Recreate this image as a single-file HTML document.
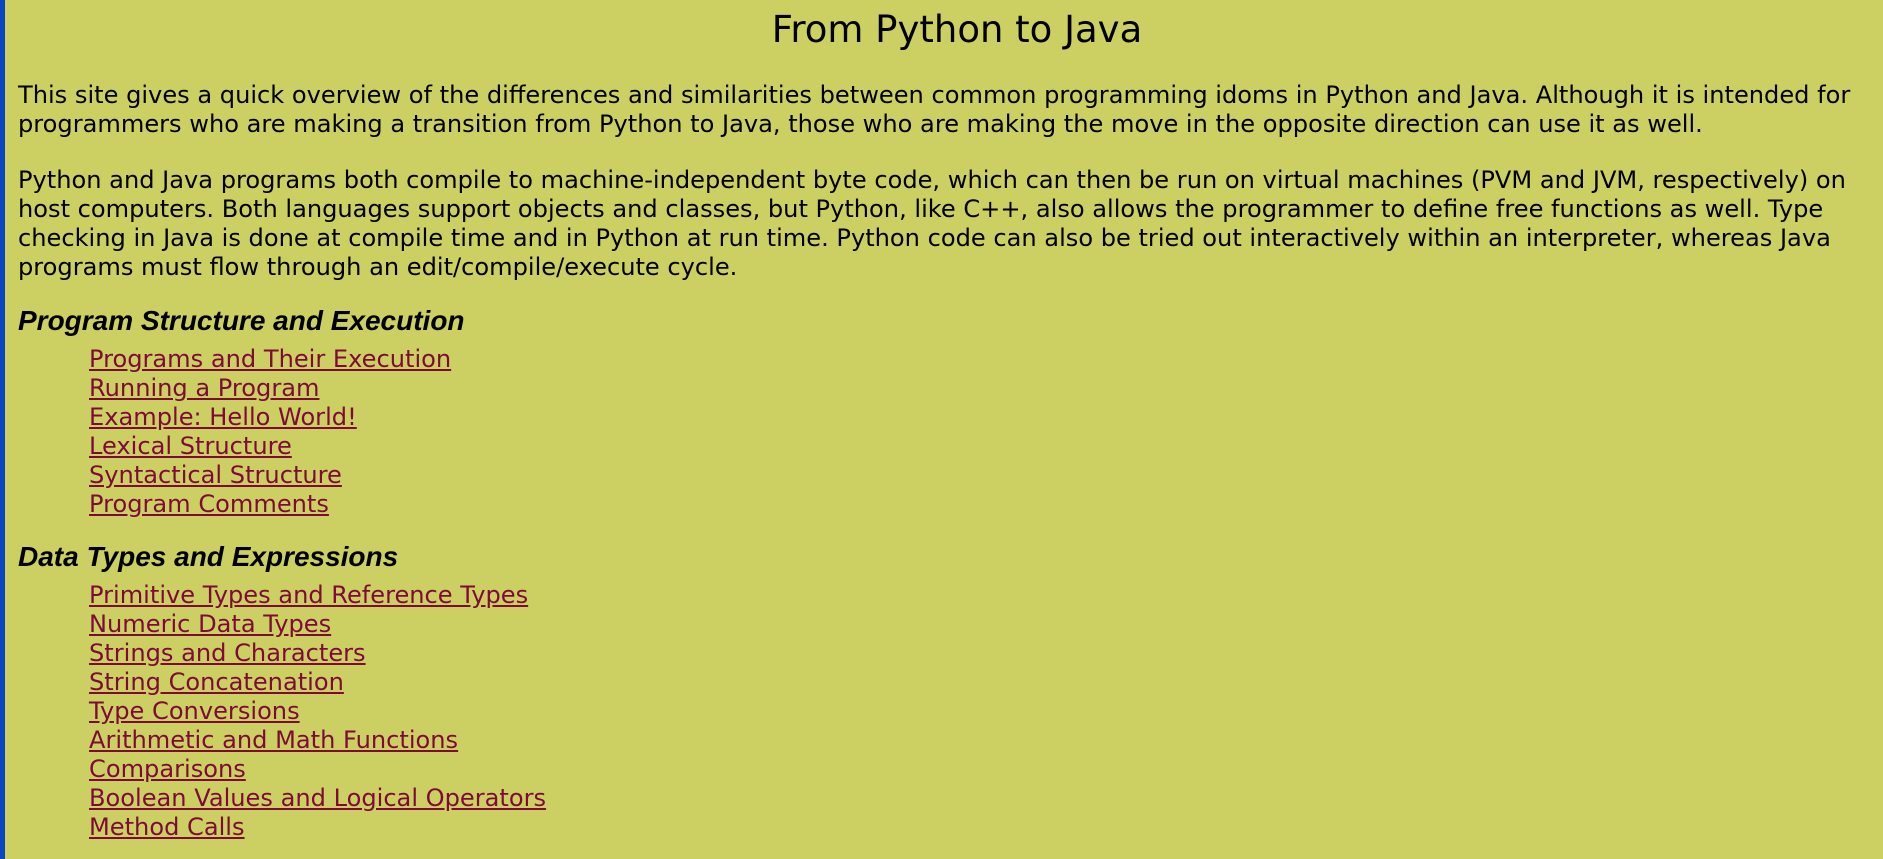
<!DOCTYPE html>
<html><head><meta charset="utf-8"><style>
html,body{margin:0;padding:0;}
body{width:1883px;height:859px;overflow:hidden;background:#cccf61;border-left:5px solid #0b45c2;box-sizing:border-box;font-family:"DejaVu Sans",sans-serif;font-size:24.1px;color:#000;position:relative;}
h1{position:absolute;margin:0;top:8px;left:13px;width:1878px;text-align:center;font-weight:normal;font-size:37px;line-height:44px;}
.p{position:absolute;left:13px;line-height:29px;white-space:nowrap;}
h2{position:absolute;margin:0;left:13px;font-family:"Liberation Sans",sans-serif;font-weight:bold;font-style:italic;font-size:28px;}
ul{position:absolute;left:84px;margin:0;padding:0;list-style:none;line-height:29px;}
a{color:#7f0a3a;text-decoration:underline;}
</style></head><body>
<h1>From Python to Java</h1>
<div class="p" style="top:81px">This site gives a quick overview of the differences and similarities between common programming idoms in Python and Java. Although it is intended for<br>programmers who are making a transition from Python to Java, those who are making the move in the opposite direction can use it as well.</div>
<div class="p" style="top:166px">Python and Java programs both compile to machine-independent byte code, which can then be run on virtual machines (PVM and JVM, respectively) on<br>host computers. Both languages support objects and classes, but Python, like C++, also allows the programmer to define free functions as well. Type<br>checking in Java is done at compile time and in Python at run time. Python code can also be tried out interactively within an interpreter, whereas Java<br>programs must flow through an edit/compile/execute cycle.</div>
<h2 style="top:305px">Program Structure and Execution</h2>
<ul style="top:345px">
<li><a>Programs and Their Execution</a></li>
<li><a>Running a Program</a></li>
<li><a>Example: Hello World!</a></li>
<li><a>Lexical Structure</a></li>
<li><a>Syntactical Structure</a></li>
<li><a>Program Comments</a></li>
</ul>
<h2 style="top:541px">Data Types and Expressions</h2>
<ul style="top:581px">
<li><a>Primitive Types and Reference Types</a></li>
<li><a>Numeric Data Types</a></li>
<li><a>Strings and Characters</a></li>
<li><a>String Concatenation</a></li>
<li><a>Type Conversions</a></li>
<li><a>Arithmetic and Math Functions</a></li>
<li><a>Comparisons</a></li>
<li><a>Boolean Values and Logical Operators</a></li>
<li><a>Method Calls</a></li>
</ul>
</body></html>
